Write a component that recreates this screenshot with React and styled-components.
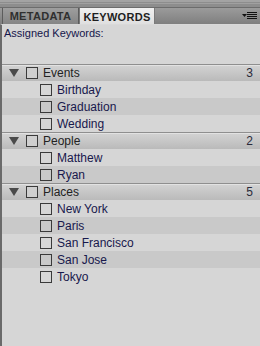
import React from 'react';
import styled, { createGlobalStyle } from 'styled-components';

const GlobalStyle = createGlobalStyle`
  html, body {
    margin: 0;
    padding: 0;
    background: #d6d6d6;
  }
  * {
    box-sizing: border-box;
  }
`;

const groups = [
  { name: 'Events', items: ['Birthday', 'Graduation', 'Wedding'] },
  { name: 'People', items: ['Matthew', 'Ryan'] },
  { name: 'Places', items: ['New York', 'Paris', 'San Francisco', 'San Jose', 'Tokyo'] },
];

const Panel = styled.div`
  width: 260px;
  height: 346px;
  display: flex;
  flex-direction: column;
  font-family: 'Liberation Sans', Arial, sans-serif;
  font-size: 11px;
  overflow: hidden;
`;

const GripStrip = styled.div`
  height: 7px;
  background: #8d8d8d;
  border-top: 2px solid #a3a3a3;
  position: relative;

  &::after {
    content: '';
    display: block;
    height: 1px;
    margin-top: 1px;
    background: #a0a0a0;
  }
`;

const TabBar = styled.div`
  height: 17px;
  display: flex;
  align-items: stretch;
  background: linear-gradient(#9b9b9b, #7f7f7f);
  border-top: 1px solid #6c6c6c;
  padding-left: 2px;
`;

const Tab = styled.div`
  width: ${({ $width }) => $width}px;
  display: flex;
  align-items: center;
  justify-content: center;
  font-weight: bold;
  font-size: 11px;
  letter-spacing: 0.3px;
  color: ${({ $active }) => ($active ? '#1e1e1e' : '#2f2f2f')};
  background: ${({ $active }) =>
    $active ? 'linear-gradient(#f0f0f0, #dedede)' : 'linear-gradient(#9e9e9e, #858585)'};
  border-left: 1px solid ${({ $active }) => ($active ? '#7a7a7a' : '#5c5c5c')};
  border-right: 1px solid ${({ $active }) => ($active ? '#7a7a7a' : '#5c5c5c')};
  margin-bottom: ${({ $active }) => ($active ? '-1px' : '0')};
`;

const TabSpacer = styled.div`
  flex: 1;
`;

const FlyoutButton = styled.div`
  width: 22px;
  display: flex;
  align-items: center;
  justify-content: center;
`;

const Content = styled.div`
  flex: 1;
  background: #d6d6d6;
  border-left: 2px solid #6a6a6a;
  border-top: 1px solid #d9d9d9;
`;

const Caption = styled.div`
  padding: 2px 0 0 2px;
  height: 39px;
  color: #15154a;
  line-height: 13px;
`;

const GroupHeader = styled.div`
  height: 17px;
  display: flex;
  align-items: center;
  background: linear-gradient(#d3d3d3, #bababa);
  border-top: 1px solid #8f8f8f;
  box-shadow: inset 0 1px 0 #e2e2e2;
  padding-right: 7px;
  color: #222;
  font-size: 12px;
`;

const Triangle = styled.span`
  width: 0;
  height: 0;
  margin: 0 7px 0 7px;
  border-left: 5px solid transparent;
  border-right: 5px solid transparent;
  border-top: 8px solid #4a4a4a;
`;

const Box = styled.span`
  width: 12px;
  height: 12px;
  border: 1px solid #3a3a3a;
  background: ${({ $tone }) => $tone};
  margin-right: 5px;
  flex-shrink: 0;
`;

const GroupName = styled.span`
  flex: 1;
`;

const Count = styled.span`
  color: #2a2a3a;
`;

const ItemRow = styled.div`
  height: 17px;
  display: flex;
  align-items: center;
  padding-left: 38px;
  background: ${({ $shaded }) => ($shaded ? '#c9c9c9' : 'transparent')};
  color: #18184c;
  font-size: 12px;
`;

const FlyoutIcon = () => (
  <svg width="18" height="10" viewBox="0 0 18 10">
    <path d="M2 3 L7 3 L4.5 6 Z" fill="#111" />
    <rect x="7" y="1" width="10" height="1" fill="#111" />
    <rect x="7" y="3" width="10" height="1" fill="#111" />
    <rect x="7" y="5" width="10" height="1" fill="#111" />
    <rect x="7" y="7" width="10" height="1" fill="#111" />
  </svg>
);

const App = () => (
  <>
    <GlobalStyle />
    <Panel>
      <GripStrip />
      <TabBar>
        <Tab $width={77}>METADATA</Tab>
        <Tab $width={76} $active>KEYWORDS</Tab>
        <TabSpacer />
        <FlyoutButton>
          <FlyoutIcon />
        </FlyoutButton>
      </TabBar>
      <Content>
        <Caption>Assigned Keywords:</Caption>
        {groups.map((group) => (
          <div key={group.name}>
            <GroupHeader>
              <Triangle />
              <Box $tone="#cfcfcf" />
              <GroupName>{group.name}</GroupName>
              <Count>{group.items.length}</Count>
            </GroupHeader>
            {group.items.map((item, i) => (
              <ItemRow key={item} $shaded={i % 2 === 1}>
                <Box $tone="transparent" />
                {item}
              </ItemRow>
            ))}
          </div>
        ))}
      </Content>
    </Panel>
  </>
);

export default App;
